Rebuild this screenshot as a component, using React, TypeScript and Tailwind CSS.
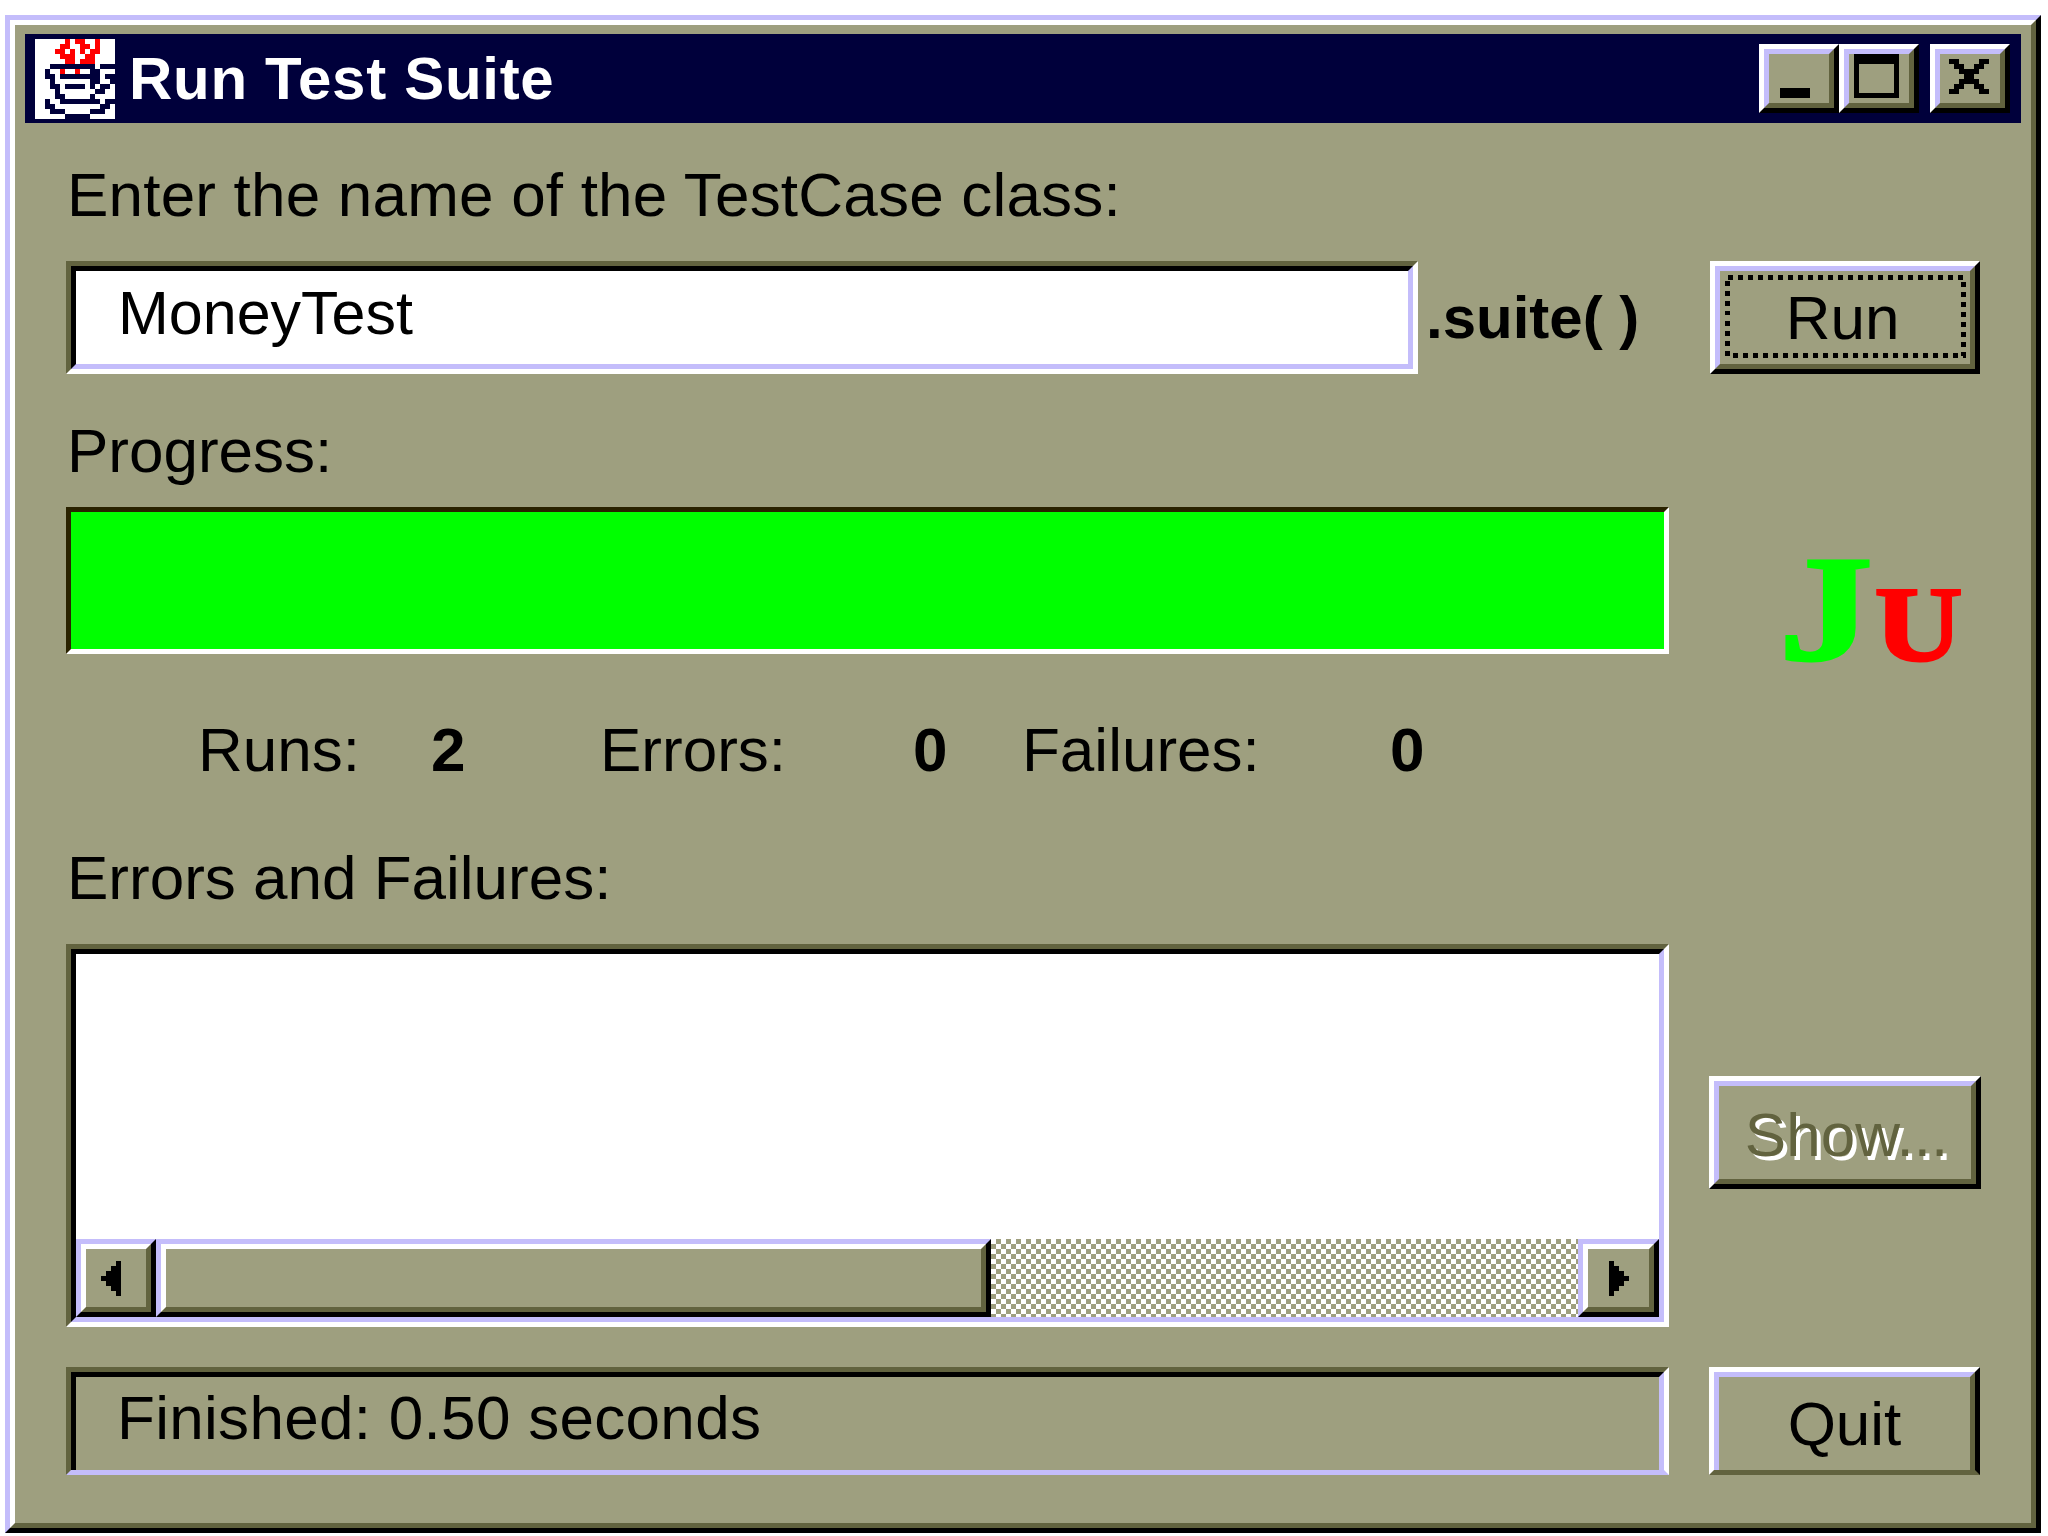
const ICON = [
  '......r.rr..r...',
  '.....rr..rr.r...',
  '....rr.r.r.rr...',
  '.....rrr..rr....',
  '......rr.rrr....',
  '...nnnnnnnnn.nnn',
  '..n..r..r..nn...',
  '..nn.nnnnnnnn.nn',
  '...n.......nn..n',
  '...nn.nnnn.n.nn.',
  '....n.......nn..',
  '....nn.....n....',
  '..n..nnnnnnnn.nn',
  '..nn.........nn.',
  '...nnn.....nnn..',
  '......nnnnn.....',
]

function CoffeeIcon() {
  return (
    <svg width="80" height="80" viewBox="0 0 16 16" shapeRendering="crispEdges" className="shrink-0">
      <rect width="16" height="16" fill="#ffffff" />
      {ICON.flatMap((row, y) =>
        row.split('').map((c, x) =>
          c === '.' ? null : (
            <rect key={`${x}-${y}`} x={x} y={y} width="1" height="1" fill={c === 'r' ? '#ff0000' : '#00003b'} />
          ),
        ),
      )}
    </svg>
  )
}

function TitleButton({ children, className = '' }: { children: React.ReactNode; className?: string }) {
  return (
    <div className={`w-[80px] h-[69px] border-[5px] border-t-white border-l-white border-r-black border-b-black ${className}`}>
      <div className="h-full border-[5px] border-t-[#c4bdfb] border-l-[#c4bdfb] border-r-[#62633f] border-b-[#62633f] bg-[#9e9f7f] relative">
        {children}
      </div>
    </div>
  )
}

function ScrollButton({ w, children }: { w: string; children?: React.ReactNode }) {
  return (
    <div className={`${w} h-full shrink-0 border-[5px] border-t-[#c4bdfb] border-l-[#c4bdfb] border-r-black border-b-black`}>
      <div className="h-full border-[5px] border-t-white border-l-white border-r-[#62633f] border-b-[#62633f] bg-[#9e9f7f] flex items-center justify-center">
        {children}
      </div>
    </div>
  )
}

export default function App() {
  return (
    <div className="pt-[15px] pl-[5px] bg-white font-['Liberation_Sans',sans-serif] text-[62px] leading-[62px] text-black">
      <div className="w-[2036px] h-[1518px] border-[5px] border-t-[#c4bdfb] border-l-[#c4bdfb] border-r-black border-b-black">
        <div className="h-full border-[5px] border-t-white border-l-white border-r-[#62633f] border-b-[#62633f] bg-[#9e9f7f]">
          {/* Title bar */}
          <div className="mt-[9px] ml-[10px] mr-[10px] h-[89px] bg-[#00003b] flex items-center pl-[10px] pr-[11px]">
            <CoffeeIcon />
            <span className="ml-[14px] font-bold text-white text-[60px] tracking-[0.7px]">Run Test Suite</span>
            <div className="ml-auto flex">
              <TitleButton>
                <div className="absolute left-[11px] top-[34px] w-[30px] h-[10px] bg-black" />
              </TitleButton>
              <TitleButton>
                <div className="absolute left-[5px] top-0 w-[45px] h-[44px] border-[5px] border-t-[10px] border-black" />
              </TitleButton>
              <TitleButton className="ml-[11px]">
                <svg width="40" height="35" viewBox="0 0 40 35" className="absolute left-[9px] top-[5px]" shapeRendering="crispEdges">
                  <path d="M0 0h10v5h5v5h10V5h5V0h10v5h-5v5h-5v5h-5v5h5v5h5v5h5v5H30v-5h-5v-5H15v5h-5v5H0v-5h5v-5h5v-5h5v-5h-5V10H5V5H0z" fill="#000" />
                </svg>
              </TitleButton>
            </div>
          </div>

          <div className="pl-[51px] pt-[41px]">
            <div className="pl-[1px] tracking-[0.2px]">Enter the name of the TestCase class:</div>

            {/* Class name row */}
            <div className="mt-[35px] flex h-[113px]">
              <div className="w-[1603px] flex">
                <div className="w-[1352px] h-full border-[5px] border-t-[#62633f] border-l-[#62633f] border-r-white border-b-white">
                  <div className="h-full border-[5px] border-t-black border-l-black border-r-[#c4bdfb] border-b-[#c4bdfb] bg-white pl-[42px] pt-[11px] text-[61px]">
                    MoneyTest
                  </div>
                </div>
                <div className="ml-[8px] pt-[26px] font-bold text-[60px]">.suite( )</div>
              </div>
              <div className="ml-[41px] w-[270px] h-full border-[5px] border-t-white border-l-white border-r-black border-b-black">
                <div className="relative h-full border-[5px] border-t-[#c4bdfb] border-l-[#c4bdfb] border-r-[#62633f] border-b-[#62633f] flex items-center justify-center pr-[5px]">
                  Run
                  <svg width="241" height="83" className="absolute left-[5px] top-[4px]" shapeRendering="crispEdges">
                    <rect x="2.5" y="2.5" width="236" height="78" fill="none" stroke="#000" strokeWidth="5" strokeDasharray="5 5" />
                  </svg>
                </div>
              </div>
            </div>

            <div className="mt-[46px] pl-[1px]">Progress:</div>

            {/* Progress row */}
            <div className="mt-[25px] flex h-[147px]">
              <div className="w-[1603px] h-full border-[5px] border-t-[#2a2200] border-l-[#2a2200] border-r-white border-b-white bg-[#00ff00]" />
              <div className="ml-[110px] mt-[27px] h-[150px] flex items-baseline font-['Liberation_Serif',serif] font-bold leading-[150px]">
                <span className="w-[96px] text-[#00ff00] text-[150px] origin-left scale-x-[1.25] [-webkit-text-stroke:3px_#00ff00]">J</span>
                <span className="text-[#ff0000] text-[105px] origin-left scale-x-[1.15] [-webkit-text-stroke:3px_#ff0000]">U</span>
              </div>
            </div>

            {/* Counters */}
            <div className="mt-[65px] flex pl-[132px]">
              <span className="w-[233px]">Runs:</span>
              <span className="w-[169px] font-bold">2</span>
              <span className="w-[313px]">Errors:</span>
              <span className="w-[109px] font-bold">0</span>
              <span className="w-[368px]">Failures:</span>
              <span className="font-bold">0</span>
            </div>

            <div className="mt-[66px] pl-[1px]">Errors and Failures:</div>

            {/* Errors list */}
            <div className="mt-[35px] flex items-start">
              <div className="w-[1603px] h-[383px] border-[5px] border-t-[#62633f] border-l-[#62633f] border-r-white border-b-white">
                <div className="h-full border-[5px] border-t-black border-l-black border-r-[#c4bdfb] border-b-[#c4bdfb] bg-white flex flex-col justify-end">
                  <div className="flex h-[78px]">
                    <ScrollButton w="w-[80px]">
                      <svg width="20" height="35" viewBox="0 0 20 35" className="-ml-[10px]" shapeRendering="crispEdges">
                        <path d="M15 0h5v35h-5v-5h-5v-5H5v-5H0v-5h5v-5h5V5h5z" fill="#000" />
                      </svg>
                    </ScrollButton>
                    <ScrollButton w="w-[835px]" />
                    <div className="flex-1 bg-[repeating-conic-gradient(#9e9f7f_0_25%,#ffffff_0_50%)] bg-[length:10px_10px]" />
                    <ScrollButton w="w-[81px]">
                      <svg width="20" height="35" viewBox="0 0 20 35" shapeRendering="crispEdges">
                        <path d="M0 0h5v5h5v5h5v5h5v5h-5v5h-5v5H5v5H0z" fill="#000" />
                      </svg>
                    </ScrollButton>
                  </div>
                </div>
              </div>
              <div className="ml-[40px] mt-[132px] w-[272px] h-[113px] border-[5px] border-t-white border-l-white border-r-black border-b-black">
                <div className="h-full border-[5px] border-t-[#c4bdfb] border-l-[#c4bdfb] border-r-[#62633f] border-b-[#62633f] flex items-center justify-center pt-[4px] pl-[3px] text-[#62633f] [text-shadow:4px_4px_0_#ffffff]">
                  Show...
                </div>
              </div>
            </div>

            {/* Status row */}
            <div className="mt-[40px] flex items-start">
              <div className="w-[1603px] h-[108px] border-[5px] border-b-[#c4bdfb] border-t-[#62633f] border-l-[#62633f] border-r-white">
                <div className="h-full border-[5px] border-b-0 border-t-black border-l-black border-r-[#c4bdfb] pl-[41px] pt-[10px] tracking-[0.3px]">
                  Finished: 0.50 seconds
                </div>
              </div>
              <div className="ml-[40px] w-[271px] h-[108px] border-[5px] border-t-white border-l-white border-r-black border-b-[#62633f]">
                <div className="h-full border-[5px] border-b-0 border-t-[#c4bdfb] border-l-[#c4bdfb] border-r-[#62633f] flex items-center justify-center">
                  Quit
                </div>
              </div>
            </div>
          </div>
        </div>
      </div>
    </div>
  )
}
